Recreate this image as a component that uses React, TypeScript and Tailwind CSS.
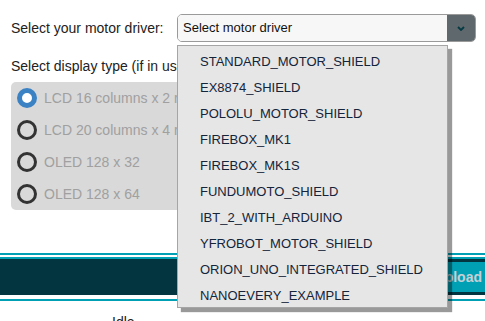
import React from "react";

const drivers = [
  "STANDARD_MOTOR_SHIELD",
  "EX8874_SHIELD",
  "POLOLU_MOTOR_SHIELD",
  "FIREBOX_MK1",
  "FIREBOX_MK1S",
  "FUNDUMOTO_SHIELD",
  "IBT_2_WITH_ARDUINO",
  "YFROBOT_MOTOR_SHIELD",
  "ORION_UNO_INTEGRATED_SHIELD",
  "NANOEVERY_EXAMPLE",
];

const displays = [
  "LCD 16 columns x 2 rows",
  "LCD 20 columns x 4 rows",
  "OLED 128 x 32",
  "OLED 128 x 64",
];

export default function App() {
  return (
    <div
      className="relative w-[485px] h-[321px] overflow-hidden bg-white text-[#222]"
      style={{ fontFamily: '"Liberation Sans", Arial, sans-serif' }}
    >
      <div className="flex items-center mt-[14px] h-[28px] pl-[11px]">
        <div className="w-[166px] text-[14px] leading-[16px]">Select your motor driver:</div>
        <div className="flex h-[28px] w-[299px] rounded-[5px] border border-[#9a9a9a] overflow-hidden">
          <div className="flex-1 bg-[#f7f7f7] pl-[5px] flex items-center text-[13px] text-[#111]">
            Select motor driver
          </div>
          <div className="w-[28px] bg-[#5f686c] flex items-center justify-center">
            <svg width="8" height="5" viewBox="0 0 8 5">
              <path d="M1 1 L4 4 L7 1" fill="none" stroke="#053a44" strokeWidth="1.8" />
            </svg>
          </div>
        </div>
      </div>

      <div className="mt-[16px] h-[16px] leading-[16px] pl-[11px] text-[14px] whitespace-nowrap">
        Select display type (if in use):
      </div>

      <div className="ml-[11px] mt-[8px] w-[240px] h-[128px] rounded-[5px] bg-[#d9d9d9]">
        {displays.map((d, i) => (
          <div key={d} className="flex items-center h-[32px] pl-[6px] gap-[7px]">
            <div
              className={
                i === 0
                  ? "w-[20px] h-[20px] rounded-full border-[5px] border-[#3b82c4] bg-white"
                  : "w-[20px] h-[20px] rounded-full border-[3px] border-[#333]"
              }
            />
            <span className="text-[14px] text-[#a0a0a0] whitespace-nowrap">{d}</span>
          </div>
        ))}
      </div>

      <div className="mt-[43px]">
        <div className="h-[2px] bg-[#00a0b4]" />
        <div className="h-[2px] bg-white" />
        <div className="h-[2px] bg-[#00a0b4]" />
        <div className="h-[36px] bg-[#023540] flex justify-end items-center">
          <div className="h-[30px] w-[80px] bg-[#00a0b4] flex items-center justify-end pr-[3px] text-[14px] font-bold text-[#c5d0d4]">
            Upload
          </div>
        </div>
        <div className="h-[4px] bg-white" />
        <div className="h-[2px] bg-[#00a0b4]" />
      </div>

      <div className="mt-[13px] pl-[112px] text-[14px] leading-[16px] text-[#222]">Idle</div>

      <div className="absolute left-[177px] top-[45px] w-[271px] h-[263px] bg-[#e6e6e6] border border-[#a5a5a5] shadow-[4px_4px_1px_rgba(0,0,0,0.4)] pt-[3px]">
        {drivers.map((d) => (
          <div key={d} className="h-[26px] flex items-center pl-[22px] text-[13px] text-[#14243a]">
            {d}
          </div>
        ))}
      </div>
    </div>
  );
}
